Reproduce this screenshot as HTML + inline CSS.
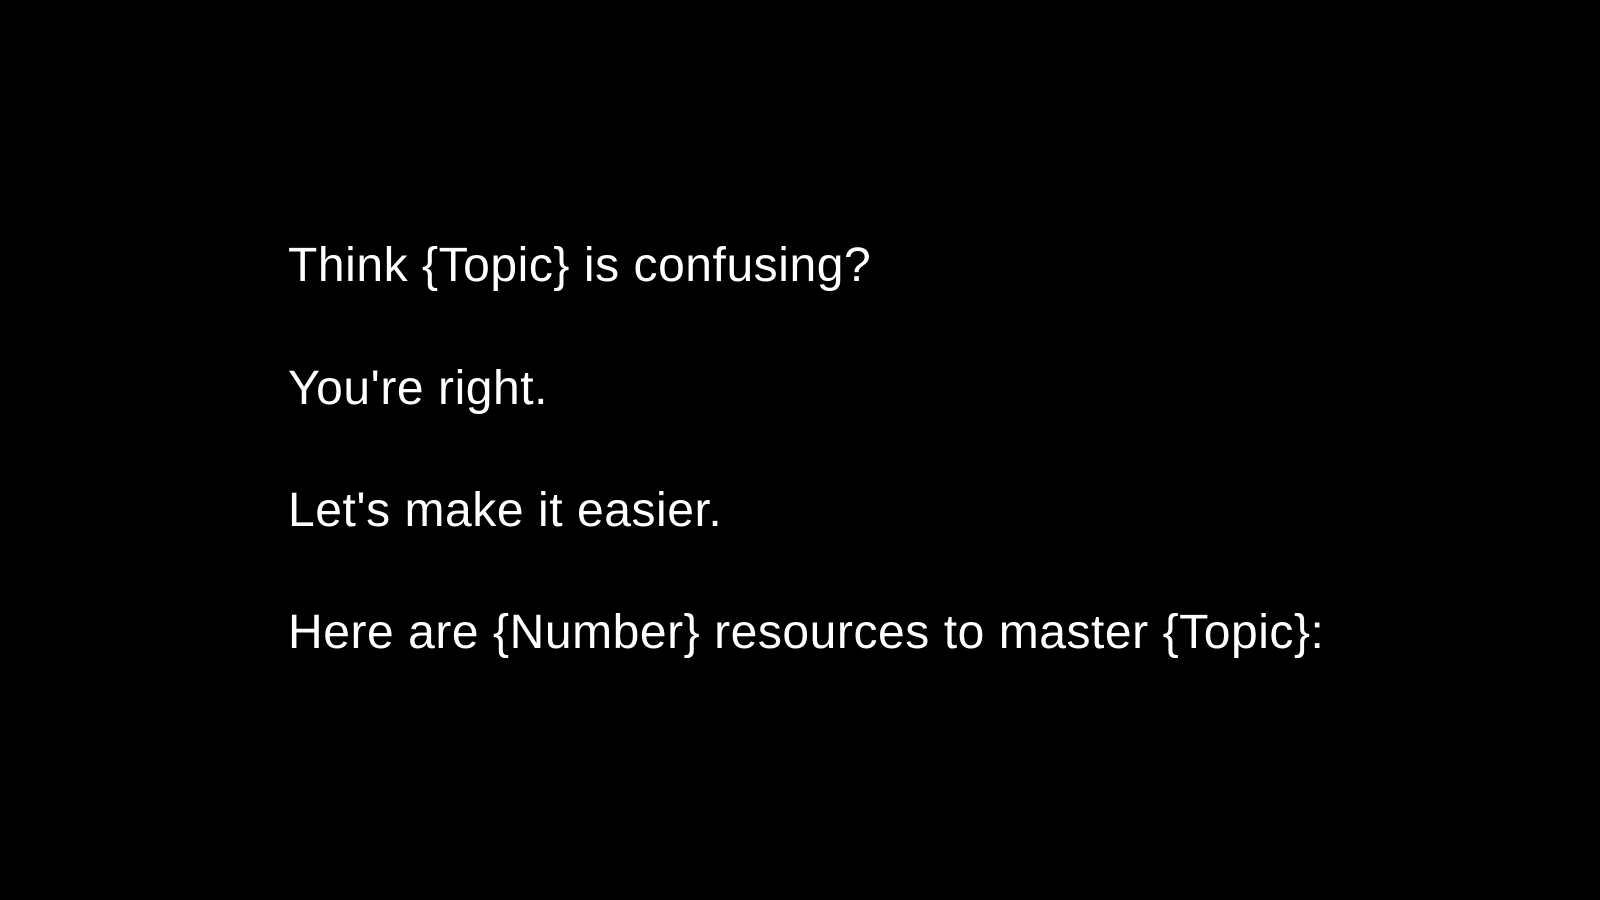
<!DOCTYPE html>
<html><head><meta charset="utf-8"><style>
html,body{margin:0;padding:0;background:#000;width:1600px;height:900px;overflow:hidden}
div{position:absolute;left:288px;color:#fff;font-family:"Liberation Sans",sans-serif;font-size:48px;line-height:48px;white-space:nowrap;letter-spacing:0.55px}
</style></head><body>
<div style="top:242px">Think {Topic} is confusing?</div>
<div style="top:365px">You're right.</div>
<div style="top:487px">Let's make it easier.</div>
<div style="top:609px">Here are {Number} resources to master {Topic}:</div>
</body></html>
